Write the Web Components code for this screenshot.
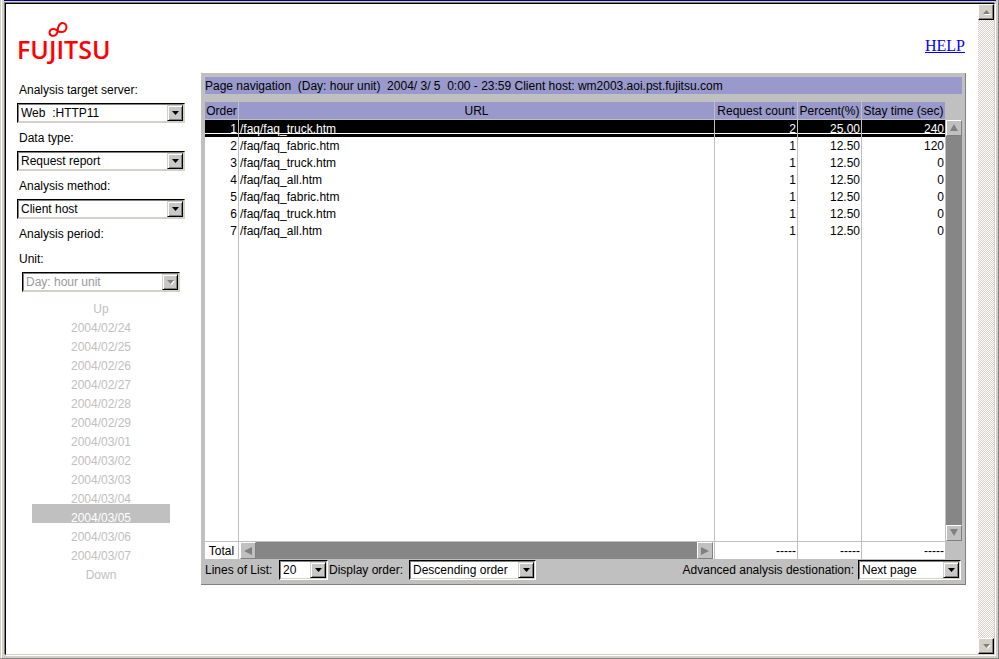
<!DOCTYPE html>
<html lang="en">
<head>
<meta charset="utf-8">
<title>Page navigation</title>
<style>
    body {
        margin: 0;
        font: 12px/16px "Liberation Sans", Arial, sans-serif;
        color: #000;
    }
</style>
</head>
<body>
<app-window>
    <app-header></app-header>
    <side-bar>
        <select-field label="Analysis target server:" value="Web&nbsp; :HTTP11"></select-field>
        <select-field label="Data type:" value="Request report"></select-field>
        <select-field label="Analysis method:" value="Client host"></select-field>
        <period-picker days="2004/02/24,2004/02/25,2004/02/26,2004/02/27,2004/02/28,2004/02/29,2004/03/01,2004/03/02,2004/03/03,2004/03/04,2004/03/05,2004/03/06,2004/03/07" selected="2004/03/05"></period-picker>
    </side-bar>
    <report-panel>
        <span slot="title">Page navigation  (Day: hour unit)  2004/ 3/ 5  0:00 - 23:59 Client host: wm2003.aoi.pst.fujitsu.com</span>
        <report-table></report-table>
        <select-field slot="tools" class="lines" inline label="Lines of List:" value="20"></select-field>
        <select-field slot="tools" class="order" inline label="Display order:" value="Descending order"></select-field>
        <select-field slot="tools" class="target" inline label="Advanced analysis destionation:" value="Next page"></select-field>
    </report-panel>
</app-window>

<script>
// Base: clones the template and puts it in the shadow root
class BaseElement extends HTMLElement {
    constructor() {
        super();
        this.attachShadow({mode: "open"});
    }

    connectedCallback() {
        const template = document.createElement("template");
        template.innerHTML = this.getStyles() + this.getTemplate();
        this.shadowRoot.replaceChildren(template.content.cloneNode(true));
    }
}

class AppWindow extends BaseElement {
    getTemplate() {
        return `
            <div class="outer"><div class="edge"><div class="sunken"><div class="view">
                <main><slot></slot></main>
                <scroll-bar class="page" direction="vertical"></scroll-bar>
            </div></div></div></div>
        `;
    }

    getStyles() {
        return `
        <style>
        :host { display: block; }
        .outer {
            box-sizing: border-box;
            min-height: 100vh;
            display: grid;
            background: #d4d0c8;
            border-left: 1px solid #d4d0c8;
            border-right: 1px solid #808080;
            border-bottom: 1px solid #808080;
        }
        .edge {
            display: grid;
            border-left: 1px solid #fff;
            padding: 0 2px 2px;
        }
        .sunken {
            display: grid;
            padding-top: 1px;
            border-top: 1px solid #000080;
        }
        .view {
            display: grid;
            grid-template-columns: 1fr 16px;
            margin: 1px;
            background: #fff;
            border: 1px solid #000;
            border-right-color: #d4d0c8;
            border-bottom-color: #d4d0c8;
            box-shadow: -1px -1px #808080, 1px 1px #fff;
        }
        main {
            display: grid;
            grid-template-columns: 195px 1fr;
            grid-template-rows: 69px auto;
            align-items: start;
            padding-right: 12px;
        }
        .page {
            --face: #d4d0c8;
            --shade: #808080;
            --edge: #000;
            --track: repeating-conic-gradient(#d4d0c8 0 25%, #fff 0 50%) 0 0 / 2px 2px;
        }
        </style>
        `;
    }
}

class AppHeader extends BaseElement {
    getTemplate() {
        return `
            <svg width="100" height="48" viewBox="18 19 100 48" role="img" aria-label="Fujitsu">
                <path d="M57.500 31C55.500 27.800 49.800 28.500 49.500 32.500C49.800 37.200 56 36.800 57.300 32.500C58.300 29 57.300 24.500 61.800 23C68.200 22.300 67.800 32.300 61.800 32C59.500 32 58.500 31.800 57.500 31Z"/>
                <text x="17" y="59">FUJITSU</text>
            </svg>
            <a href="#help">HELP</a>
        `;
    }

    getStyles() {
        return `
        <style>
        :host {
            grid-column: 1 / -1;
            display: flex;
            justify-content: space-between;
            align-items: flex-start;
            padding: 15px 1px 0 12px;
        }
        svg { overflow: visible; }
        path { fill: none; stroke: #f00; stroke-width: 2; }
        text { fill: #f00; font: 600 25px "Open Sans", sans-serif; }
        a {
            margin-top: 18px;
            color: #00f;
            font: 16px/18px "Liberation Serif", "Times New Roman", serif;
        }
        </style>
        `;
    }
}

class SideBar extends BaseElement {
    getTemplate() {
        return `<slot></slot>`;
    }

    getStyles() {
        return `
        <style>
        :host {
            display: flex;
            flex-direction: column;
            gap: 7px;
            padding: 9px 16px 0 11px;
        }
        </style>
        `;
    }
}

class SelectField extends BaseElement {
    getTemplate() {
        const disabled = this.hasAttribute("disabled") ? "disabled" : "";
        return `
            <label for="field">${this.getAttribute("label")}</label>
            <div class="box">
                <select id="field" ${disabled}><option>${this.getAttribute("value")}</option></select>
                <span class="arrow"><svg width="7" height="4" viewBox="0 0 7 4"><path d="M0 0H7L3.500 4Z"/></svg></span>
            </div>
        `;
    }

    getStyles() {
        return `
        <style>
        :host { display: block; }
        :host([inline]) { display: flex; align-items: center; gap: 4px; }
        label { display: block; padding: 0 2px 5px; }
        :host([inline]) label {
            min-width: var(--label-width, auto);
            padding: 0;
            white-space: nowrap;
        }
        .box {
            position: relative;
            width: var(--field-width, auto);
            margin: 0 var(--field-indent, 0);
            border: 1px solid #000;
            border-right-color: #d4d0c8;
            border-bottom-color: #d4d0c8;
        }
        :host([inline]) .box { border-right-color: #fff; border-bottom-color: #fff; }
        select {
            display: block;
            box-sizing: border-box;
            width: 100%;
            height: 18px;
            margin: 0;
            padding: 0 17px 0 2px;
            appearance: none;
            border: 1px solid #808080;
            border-right-color: #d4d0c8;
            border-bottom-color: #d4d0c8;
            border-radius: 0;
            background: #fff;
            color: #000;
            font: inherit;
            opacity: 1;
        }
        select:disabled { color: #999; }
        .arrow {
            position: absolute;
            top: 1px;
            right: 1px;
            bottom: 1px;
            width: 16px;
            box-sizing: border-box;
            display: grid;
            place-items: center;
            pointer-events: none;
            background: #c8c8c8;
            border: 1px solid #d4d0c8;
            border-right-color: #000;
            border-bottom-color: #000;
            box-shadow: inset 1px 1px #fff, inset -1px -1px #808080;
        }
        :host([disabled]) .arrow path { fill: #808080; }
        :host([disabled]) svg { filter: drop-shadow(1px 1px #fff); }
        </style>
        `;
    }
}

class PeriodPicker extends BaseElement {
    getTemplate() {
        const selected = this.getAttribute("selected");
        const days = this.getAttribute("days").split(",");
        return `
            <div class="heading">Analysis period:</div>
            <select-field label="Unit:" value="Day: hour unit" disabled></select-field>
            <div class="days">
                <button disabled>Up</button>
                ${days.map(day => `<button disabled class="${day === selected ? "selected" : ""}">${day}</button>`).join("")}
                <button disabled>Down</button>
            </div>
        `;
    }

    getStyles() {
        return `
        <style>
        :host { display: block; }
        .heading { padding: 0 2px 9px; }
        select-field { --field-indent: 5px; }
        .days {
            display: flex;
            flex-direction: column;
            margin: 3px 15px 0;
        }
        button {
            height: 19px;
            padding: 9px 0 0;
            border: 0;
            background: none;
            color: #c0c0c0;
            font: inherit;
            line-height: 10px;
        }
        .selected { background: #c0c0c0; color: #fff; }
        </style>
        `;
    }
}

class ReportPanel extends BaseElement {
    getTemplate() {
        return `
            <header><slot name="title"></slot></header>
            <slot></slot>
            <footer><slot name="tools"></slot></footer>
        `;
    }

    getStyles() {
        return `
        <style>
        :host {
            display: block;
            background: #c0c0c0;
            padding: 4px 3px 4px 4px;
            border-right: 1px solid #808080;
            border-bottom: 1px solid #808080;
        }
        header {
            box-sizing: border-box;
            height: 17px;
            margin-bottom: 8px;
            padding-top: 2px;
            background: #9999cc;
            line-height: 15px;
            white-space: pre;
        }
        footer {
            display: flex;
            margin-top: 1px;
        }
        ::slotted(.lines) { --label-width: 70px; --field-width: 47px; margin-right: 1px; }
        ::slotted(.order) { --label-width: 76px; --field-width: 125px; }
        ::slotted(.target) { --field-width: 101px; margin-left: auto; margin-right: 1px; }
        </style>
        `;
    }
}

class ReportTable extends BaseElement {
    getRows() {
        return [
            ["1", "/faq/faq_truck.htm", "2", "25.00", "240"],
            ["2", "/faq/faq_fabric.htm", "1", "12.50", "120"],
            ["3", "/faq/faq_truck.htm", "1", "12.50", "0"],
            ["4", "/faq/faq_all.htm", "1", "12.50", "0"],
            ["5", "/faq/faq_fabric.htm", "1", "12.50", "0"],
            ["6", "/faq/faq_truck.htm", "1", "12.50", "0"],
            ["7", "/faq/faq_all.htm", "1", "12.50", "0"]
        ];
    }

    getTemplate() {
        const rows = this.getRows().map((row, i) => `
            <tr class="${i === 0 ? "current" : ""}">${row.map(cell => `<td>${cell}</td>`).join("")}</tr>
        `).join("");
        return `
            <table>
                <colgroup><col class="order"><col><col class="count"><col class="percent"><col class="stay"></colgroup>
                <thead>
                    <tr><th>Order</th><th>URL</th><th>Request count</th><th>Percent(%)</th><th>Stay time (sec)</th></tr>
                </thead>
                <tbody>
                    ${rows}
                    <tr class="rest"><td></td><td></td><td></td><td></td><td></td></tr>
                </tbody>
                <tfoot>
                    <tr><td>Total</td><td class="scroll"><scroll-bar direction="horizontal"></scroll-bar></td><td>-----</td><td>-----</td><td>-----</td></tr>
                </tfoot>
            </table>
            <scroll-bar direction="vertical"></scroll-bar>
        `;
    }

    getStyles() {
        return `
        <style>
        :host {
            display: grid;
            grid-template-columns: 1fr 16px;
        }
        table {
            width: 100%;
            table-layout: fixed;
            border-spacing: 0;
            line-height: 15px;
        }
        .order { width: 34px; }
        .count { width: 83px; }
        .percent { width: 64px; }
        .stay { width: 84px; }
        th, td {
            padding: 2px 1px 0;
            border-right: 1px solid #c0c0c0;
            background-clip: padding-box;
            white-space: nowrap;
        }
        th {
            padding: 2px 0 0;
            background-color: #9999cc;
            border-bottom: 1px solid #c0c0c0;
            font-weight: normal;
        }
        td { background-color: #fff; text-align: right; }
        td:nth-child(2) { text-align: left; }
        .current td {
            color: #fff;
            background-image: linear-gradient(#000 13px, #fff 13px 14px, #000 14px);
        }
        .rest td { height: 300px; }
        tfoot td { border-top: 1px solid #c0c0c0; }
        tfoot td:first-child { text-align: center; }
        tfoot .scroll { padding: 0 1px; }
        tfoot scroll-bar { height: 17px; }
        table + scroll-bar { margin: 18px 0; }
        </style>
        `;
    }
}

class ScrollBar extends BaseElement {
    getTemplate() {
        const vertical = this.getAttribute("direction") === "vertical";
        const back = vertical ? "M4 0L8 7H0Z" : "M0 4L8 0V8Z";
        const next = vertical ? "M0 0H8L4 7Z" : "M0 0L8 4L0 8Z";
        // the page bar has flatter arrows
        const box = this.classList.contains("page")
            ? `width="7" height="4" viewBox="0 0 8 7" preserveAspectRatio="none"`
            : `width="8" height="8"`;
        return `
            <button aria-label="Back"><svg ${box}><path d="${back}"/></svg></button>
            <div></div>
            <button aria-label="Forward"><svg ${box}><path d="${next}"/></svg></button>
        `;
    }

    getStyles() {
        return `
        <style>
        :host {
            display: grid;
            grid-template-rows: 16px 1fr 16px;
        }
        :host([direction="horizontal"]) {
            grid-template-rows: none;
            grid-template-columns: 16px 1fr 16px;
        }
        div { background: var(--track, #868686); }
        button {
            display: grid;
            place-items: center;
            padding: 0;
            background: var(--face, #c0c0c0);
            border: 1px solid #fff;
            border-right-color: var(--edge, #808080);
            border-bottom-color: var(--edge, #808080);
            box-shadow: inset -1px -1px var(--shade, transparent);
        }
        path { fill: #808080; }
        :host(.page) svg { filter: drop-shadow(1px 1px #fff); }
        </style>
        `;
    }
}

customElements.define("scroll-bar", ScrollBar);
customElements.define("select-field", SelectField);
customElements.define("period-picker", PeriodPicker);
customElements.define("app-header", AppHeader);
customElements.define("side-bar", SideBar);
customElements.define("report-table", ReportTable);
customElements.define("report-panel", ReportPanel);
customElements.define("app-window", AppWindow);
</script>
</body>
</html>
